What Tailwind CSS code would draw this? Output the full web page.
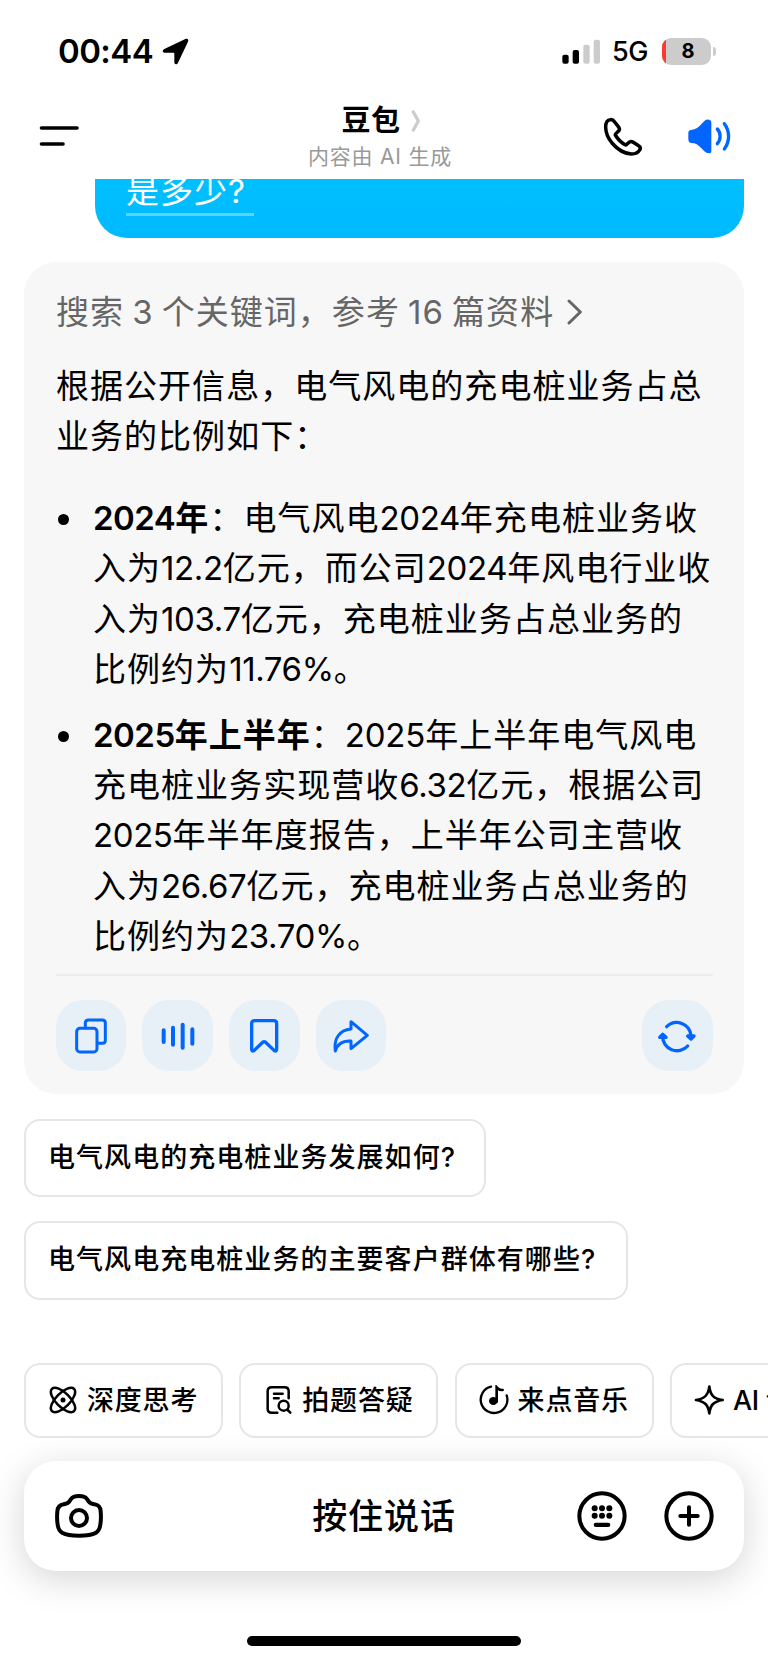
<!DOCTYPE html>
<html lang="zh-CN">
<head>
  <meta charset="UTF-8" />
  <meta name="viewport" content="width=device-width, initial-scale=1.0" />
  <title>豆包</title>
  <script src="https://cdn.jsdelivr.net/npm/@tailwindcss/browser@4"></script>
</head>
<body class="bg-white text-black font-['Inter','Noto_Sans_CJK_SC',sans-serif] w-[768px] h-[1663px] overflow-hidden">

  <!-- Status Bar -->
  <div class="h-[104px] pl-[58px] pr-[52px] pb-[2px] flex items-center justify-between">
    <div class="flex items-center gap-[9px]">
      <span class="text-[33px] leading-[40px] font-semibold tracking-[-0.6px]">00:44</span>
      <svg class="w-[27px] h-[27px]" viewBox="0 0 81 81" fill="#000"><path d="M70 3C76 0 81 4 78 11L48 74C45 81 37 80 37 73V47Q37 44 34 44H8C1 44 0 37 7 33Z"/></svg>
    </div>
    <div class="flex items-center">
      <svg class="w-[39px] h-[25px]" viewBox="0 0 117 75">
        <rect x="1" y="47" width="19" height="27" rx="6"/>
        <rect x="32" y="33" width="19" height="41" rx="6"/>
        <rect x="64" y="17" width="19" height="57" rx="6" fill="#ccc"/>
        <rect x="95" y="2" width="19" height="72" rx="6" fill="#ccc"/>
      </svg>
      <span class="ml-[11px] w-[38px] pt-[2px] text-[27px] leading-[40px] font-medium tracking-[-0.5px]">5G</span>
      <div class="ml-[12px] relative w-[49px] h-[27px] rounded-[9px] bg-[#ccc] overflow-hidden flex items-center justify-center text-[20px] font-bold">
        <span class="absolute left-0 top-0 w-1 h-full bg-[#ff3b30]"></span>
        <span class="pl-[3px]">8</span>
      </div>
      <span class="ml-[2px] w-[3px] h-[9px] rounded-r-full bg-[#ccc]"></span>
    </div>
  </div>

  <!-- Header -->
  <header class="h-[75px] grid grid-cols-[232px_296px_1fr]">
    <svg class="ml-[39px] mt-[20px] w-[40px] h-[24px]" viewBox="0 0 120 72" stroke="#000" stroke-width="11" stroke-linecap="round"><path d="M7.500 12H114M7.500 60H72"/></svg>
    <div class="flex flex-col items-center">
      <div class="pl-[2px] flex items-center h-[33px] gap-[10px]">
        <span class="text-[29px] leading-[32px] font-semibold tracking-[0.500px]">豆包</span>
        <svg class="w-[10px] h-[22px]" viewBox="0 0 30 66" fill="none" stroke="#ccc" stroke-width="10" stroke-linecap="round" stroke-linejoin="round"><path d="M7 6L22 33L7 60"/></svg>
      </div>
      <div class="mt-[6px] text-[21px] leading-[28px] tracking-[0.8px] text-[#999]">内容由 AI 生成</div>
    </div>
    <div class="pl-[74.500px] pt-[13px] flex gap-[44px]">
      <svg class="w-[40px] h-[40px]" viewBox="0 0 120 120" fill="none" stroke="#000" stroke-width="10.500" stroke-linejoin="round"><path d="M8 30C8 16 13 8 22 8C28 7 31 9 35 15L46 29C50 34 50 40 45 44C40 48 36 50 37 54C44 66 56 78 68 84C72 85 75 75 82 74C86 73 89 75 93 77L107 86C112 89 113 94 110 99C105 108 95 111 85 111C66 110 44 98 27 78C14 62 8 46 8 30Z"/></svg>
      <svg class="w-[45px] h-[40px]" viewBox="0 0 135 120" fill="none" stroke="#06f" stroke-width="10" stroke-linecap="round"><path stroke="none" fill="#06f" d="M4 48Q4 40 12 39L22 37C34 33 42 22 52 12Q58 7 66 8Q73 9 73 16V101Q73 109 66 109Q58 109 52 103C42 93 34 83 22 79L12 78Q4 76 4 68Z"/><path d="M91 36C102 48 102 68 91 80M112 20C129 42 129 74 112 96"/></svg>
    </div>
  </header>

  <!-- User message, scrolled under the header -->
  <div class="ml-[95px] w-[649px] h-[59px] rounded-b-[32px] bg-linear-to-b from-[#00c0ff] to-[#00b9ff] overflow-hidden flex items-end pl-[31px] pb-[22px]">
    <span class="w-[128px] text-[33px] leading-[44px] tracking-[1px] text-white border-b-3 border-white/35 whitespace-nowrap">是多少?</span>
  </div>

  <!-- Answer -->
  <main class="mt-[24px] ml-6 w-[720px] h-[832px] rounded-[32px] bg-[#f7f7f7] px-8 pt-[24.500px] text-[33px] leading-[50.200px] tracking-[1.030px] whitespace-nowrap">
    <div class="flex items-center text-[#666]">
      <span class="[word-spacing:-2.200px]">搜索 3 个关键词，参考 16 篇资料</span>
      <svg class="ml-[13px] w-[16px] h-[26px]" viewBox="0 0 48 78" fill="none" stroke="#666" stroke-width="9" stroke-linecap="round" stroke-linejoin="round"><path d="M6 6L40 39L6 72"/></svg>
    </div>

    <p class="mt-[24px]">根据公开信息，电气风电的充电桩业务占总<br>业务的比例如下：</p>

    <ul class="mt-[32px] space-y-[16px]">
      <li class="flex">
        <span class="shrink-0 mt-[21px] ml-[2px] mr-[24px] size-[11px] rounded-full bg-black"></span>
        <div>
          <b class="font-semibold"><span class="tracking-[-0.5px]">2024</span>年</b>：电气风电<span class="tracking-[-0.4px]">2024</span>年充电桩业务收<br>
          入为<span class="tracking-[-0.4px]">12.2</span>亿元，而公司<span class="tracking-[-0.4px]">2024</span>年风电行业收<br>
          入为<span class="tracking-[-0.4px]">103.7</span>亿元，充电桩业务占总业务的<br>
          比例约为<span class="tracking-[-0.4px]">11.76%</span>。
        </div>
      </li>
      <li class="flex">
        <span class="shrink-0 mt-[21px] ml-[2px] mr-[24px] size-[11px] rounded-full bg-black"></span>
        <div>
          <b class="font-semibold"><span class="tracking-[-0.5px]">2025</span>年上半年</b>：<span class="tracking-[-0.2px]">2025</span>年上半年电气风电<br>
          充电桩业务实现营收<span class="tracking-[-0.4px]">6.32</span>亿元，根据公司<br>
          <span class="tracking-[-0.4px]">2025</span>年半年度报告，上半年公司主营收<br>
          入为<span class="tracking-[-0.4px]">26.67</span>亿元，充电桩业务占总业务的<br>
          比例约为<span class="tracking-[-0.4px]">23.70%</span>。
        </div>
      </li>
    </ul>

    <!-- Answer actions -->
    <div class="mt-[13.500px] -ml-[0.500px] w-[657px] border-t-2 border-[#eee] pt-[24px] flex gap-[16.300px]">
      <button class="size-[70.500px] rounded-[27px] bg-[#e7eff7] flex items-center justify-center">
        <svg class="size-[36px]" viewBox="0 0 108 108" fill="none" stroke="#06f" stroke-width="9" stroke-linejoin="round"><rect x="11" y="31" width="61" height="71" rx="10"/><path d="M37 31V15Q37 6 46 6H88Q97 6 97 15V67Q97 76 88 76H73"/></svg>
      </button>
      <button class="size-[70.500px] rounded-[27px] bg-[#e7eff7] flex items-center justify-center">
        <svg class="size-[36px]" viewBox="0 0 108 108" fill="none" stroke="#06f" stroke-width="12" stroke-linecap="round"><path d="M11 37V72M39 29V80M68 20V89M97 34V77"/></svg>
      </button>
      <button class="size-[70.500px] rounded-[27px] bg-[#e7eff7] flex items-center justify-center">
        <svg class="size-[36px]" viewBox="0 0 108 108" fill="none" stroke="#06f" stroke-width="10" stroke-linejoin="round"><path d="M17 17Q17 8 26 8H83Q92 8 92 17V94Q92 101 85 98L58 72Q54 70 51 72L24 98Q17 101 17 94Z"/></svg>
      </button>
      <button class="size-[70.500px] rounded-[27px] bg-[#e7eff7] flex items-center justify-center">
        <svg class="size-[36px]" viewBox="0 0 108 108" fill="none" stroke="#06f" stroke-width="9" stroke-linejoin="round"><path d="M54 11L103 52L54 92V69C31 68 13 78 7 99C2 62 19 36 54 33Z"/></svg>
      </button>
      <button class="ml-auto size-[70.500px] rounded-[27px] bg-[#e7eff7] flex items-center justify-center">
        <svg class="w-[40px] h-[36px]" viewBox="0 0 120 108" fill="none" stroke="#06f" stroke-width="10" stroke-linecap="round" stroke-linejoin="round"><path d="M29 26A43 43 0 0 1 102 54"/><path d="M92 84A43 43 0 0 1 17 54"/><path fill="#06f" d="M92 54H111L102 63ZM8 58L17 49L27 58Z"/></svg>
      </button>
    </div>
  </main>

  <!-- Suggested questions -->
  <section class="mt-[24.500px] ml-6 flex flex-col items-start gap-[24px] text-[27px] font-medium whitespace-nowrap">
    <button class="w-[462px] h-[78.500px] pl-[22px] rounded-[16px] border-2 border-[#e6e6e6] text-left tracking-[1.050px]">电气风电的充电桩业务发展如何?</button>
    <button class="w-[604px] h-[78.500px] pl-[22px] rounded-[16px] border-2 border-[#e6e6e6] text-left tracking-[1.050px]">电气风电充电桩业务的主要客户群体有哪些?</button>
  </section>

  <!-- Tools -->
  <nav class="mt-[63px] pl-6 flex gap-[16.300px] overflow-hidden text-[27px] font-medium whitespace-nowrap">
    <button class="shrink-0 w-[199px] h-[75px] pl-[22px] rounded-[16px] border-2 border-[#e6e6e6] flex items-center gap-[9px] tracking-[0.800px]">
      <svg class="size-[30px]" viewBox="0 0 90 90" fill="none" stroke="#000" stroke-width="7.500"><ellipse cx="45" cy="45" rx="47" ry="21" transform="rotate(45 45 45)"/><ellipse cx="45" cy="45" rx="47" ry="21" transform="rotate(-45 45 45)"/><circle cx="45" cy="45" r="7.500" fill="#000" stroke="none"/></svg>
      <span class="pt-[2px]">深度思考</span>
    </button>
    <button class="shrink-0 w-[199px] h-[75px] pl-[22px] rounded-[16px] border-2 border-[#e6e6e6] flex items-center gap-[9px] tracking-[0.800px]">
      <svg class="size-[30px]" viewBox="0 0 90 90" fill="none" stroke="#000" stroke-width="7.500" stroke-linecap="round"><path d="M43 83H26Q14 83 14 71V19Q14 7 26 7H65Q77 7 77 19V40M33 26H59M33 40H47M74 75L82 83"/><circle cx="62" cy="62" r="15"/></svg>
      <span class="pt-[2px]">拍题答疑</span>
    </button>
    <button class="shrink-0 w-[199px] h-[75px] pl-[22px] rounded-[16px] border-2 border-[#e6e6e6] flex items-center gap-[9px] tracking-[0.800px]">
      <svg class="size-[30px]" viewBox="0 0 90 90" fill="none" stroke="#000" stroke-width="7" stroke-linecap="round"><path d="M36 5A40 40 0 1 0 83 31"/><path d="M53 50V7Q61 16 71 15" stroke-width="8"/><ellipse cx="43" cy="48" rx="13" ry="12" fill="#000" stroke="none"/></svg>
      <span class="pt-[2px]">来点音乐</span>
    </button>
    <button class="shrink-0 w-[199px] h-[75px] pl-[22px] rounded-[16px] border-2 border-[#e6e6e6] flex items-center gap-[9px]">
      <svg class="size-[30px]" viewBox="0 0 90 90" fill="none" stroke="#000" stroke-width="8" stroke-linejoin="round"><path d="M46 5C49 30 59 42 86 45C59 49 49 60 46 85C43 60 32 49 6 45C32 42 43 30 46 5Z"/></svg>
      <span class="pt-[2px] tracking-[-0.300px]">AI 创作</span>
    </button>
  </nav>

  <!-- Input bar -->
  <footer class="mt-[23px] ml-6 w-[720px] h-[110px] rounded-[32px] bg-white shadow-[0_8px_36px_rgba(0,0,0,0.17)] grid grid-cols-[232px_256px_1fr] items-center">
    <svg class="ml-[30px] w-[50px] h-[46px]" viewBox="0 0 150 138" fill="none" stroke="#000" stroke-width="12" stroke-linejoin="round"><path d="M51 18Q57 9 75 9Q93 9 99 18C106 31 112 32 121 34C135 36 139 42 140 55Q142 78 139 95C136 117 125 128 75 128C26 128 14 117 11 95Q8 78 10 55C11 42 16 36 29 34C38 32 44 31 51 18Z"/><circle cx="75" cy="75" r="24"/></svg>
    <span class="pt-[1px] text-center text-[35px] font-medium tracking-[0.900px]">按住说话</span>
    <div class="pl-[65px] flex gap-[36.500px]">
      <svg class="size-[50px]" viewBox="0 0 150 150"><circle cx="75" cy="75" r="68" fill="none" stroke="#000" stroke-width="12"/><g><circle cx="53" cy="52" r="9"/><circle cx="75" cy="52" r="9"/><circle cx="97" cy="52" r="9"/><circle cx="53" cy="74" r="9"/><circle cx="75" cy="74" r="9"/><circle cx="97" cy="74" r="9"/><rect x="50" y="95" width="50" height="13" rx="6.500"/></g></svg>
      <svg class="size-[50px]" viewBox="0 0 150 150" fill="none" stroke="#000" stroke-width="12" stroke-linecap="round"><circle cx="75" cy="75" r="68"/><path d="M75 49V101M49 75H101"/></svg>
    </div>
  </footer>

  <!-- Home indicator -->
  <div class="mt-[65px] ml-[247px] w-[274px] h-[10px] rounded-full bg-black"></div>

</body>
</html>
